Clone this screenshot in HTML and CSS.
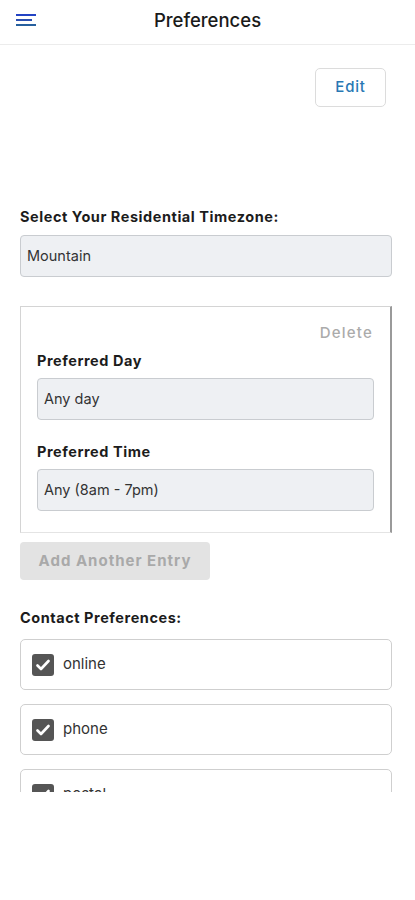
FILE: index.html
```html
<!DOCTYPE html>
<html lang="en-US">
    <head>
        <meta charset="UTF-8">
        <title>Preferences</title>
        <link rel="stylesheet" href="styles.css">
    </head>
    <body>

        <header class="topbar">
            <button class="menu-btn" aria-label="Menu">
                <svg width="22" height="14" viewBox="0 0 22 14">
                    <rect x="0" y="0" width="20" height="2" fill="#2343c4"/>
                    <rect x="0" y="5" width="16" height="2" fill="#2a4fb0"/>
                    <rect x="0" y="10" width="20" height="2" fill="#27609e"/>
                </svg>
            </button>
            <h1 class="title">Preferences</h1>
        </header>

        <main class="scroll">
            <div class="edit-row">
                <button class="edit-btn">Edit</button>
            </div>

            <label class="label">Select Your Residential Timezone:</label>
            <div class="field">Mountain</div>

            <div class="entry">
                <div class="delete">Delete</div>
                <label class="label label-sm">Preferred Day</label>
                <div class="field">Any day</div>
                <label class="label label-sm label-gap">Preferred Time</label>
                <div class="field">Any (8am - 7pm)</div>
            </div>

            <button class="add-btn">Add Another Entry</button>

            <label class="label label-contact">Contact Preferences:</label>
            <div class="check-row">
                <span class="check"><svg width="14" height="12" viewBox="0 0 14 12"><path d="M1.5 6.5 L5 10 L12.5 2" fill="none" stroke="#fff" stroke-width="2.6" stroke-linecap="round" stroke-linejoin="round"/></svg></span>
                <span>online</span>
            </div>
            <div class="check-row">
                <span class="check"><svg width="14" height="12" viewBox="0 0 14 12"><path d="M1.5 6.5 L5 10 L12.5 2" fill="none" stroke="#fff" stroke-width="2.6" stroke-linecap="round" stroke-linejoin="round"/></svg></span>
                <span>phone</span>
            </div>
            <div class="check-row">
                <span class="check"><svg width="14" height="12" viewBox="0 0 14 12"><path d="M1.5 6.5 L5 10 L12.5 2" fill="none" stroke="#fff" stroke-width="2.6" stroke-linecap="round" stroke-linejoin="round"/></svg></span>
                <span>postal</span>
            </div>
        </main>

    </body>
</html>
```

FILE: styles.css
```css
* {
    margin: 0;
    padding: 0;
    box-sizing: border-box;
}
body {
    background: #FFF;
    color: #222;
    font: 14px/1.25 Inter, "Liberation Sans", Arial, sans-serif;
    width: 415px;
}
button {
    font: inherit;
    background: none;
    border: 0;
}
.topbar {
    height: 45px;
    display: flex;
    align-items: center;
    justify-content: center;
    position: relative;
    border-bottom: 1px solid #ececec;
}
.menu-btn {
    position: absolute;
    left: 16px;
    top: 14px;
    line-height: 0;
}
.title {
    font-size: 18.5px;
    font-weight: 500;
    color: #1a1a1a;
    margin-top: -3px;
}
.scroll {
    height: 747px;
    overflow: hidden;
    padding: 0 23px 0 20px;
}
.edit-row {
    display: flex;
    justify-content: flex-end;
    padding: 23px 6px 0 0;
}
.edit-btn {
    width: 71px;
    height: 39px;
    border: 1px solid #dcdcdc;
    border-radius: 5px;
    color: #2878b4;
    font-size: 15px;
    font-weight: 500;
    letter-spacing: 0.8px;
}
.label {
    display: block;
    font-weight: 700;
    font-size: 14.5px;
    letter-spacing: 0.55px;
    color: #1c1c1c;
    margin: 101px 0 9px;
}
.field {
    height: 42px;
    display: flex;
    align-items: center;
    padding: 0 6px;
    background: #eef0f3;
    border: 1px solid #c9ccd0;
    border-radius: 4px;
    font-size: 14.5px;
    color: #333;
}
.entry {
    margin-top: 29px;
    border: 1px solid #d4d4d4;
    border-right: 2px solid #9a9a9a;
    border-bottom-color: #e4e4e4;
    padding: 17px 16px 21px 16px;
}
.delete {
    text-align: right;
    color: #ababab;
    font-size: 15px;
    font-weight: 500;
    letter-spacing: 1.2px;
    padding-right: 1px;
}
.label-sm {
    margin: 9px 0 8px;
}
.label-gap {
    margin-top: 23px;
}
.add-btn {
    display: block;
    margin-top: 9px;
    width: 190px;
    height: 38px;
    background: #e3e3e3;
    border-radius: 4px;
    color: #a9a9a9;
    font-weight: 700;
    font-size: 15px;
    letter-spacing: 1px;
}
.label-contact {
    margin: 29px 0 12px;
}
.check-row {
    height: 51px;
    display: flex;
    align-items: center;
    gap: 9px;
    padding: 0 11px;
    margin-bottom: 14px;
    border: 1px solid #cfcfcf;
    border-radius: 5px;
    font-size: 15px;
    color: #333;
}
.check {
    width: 22px;
    height: 22px;
    border-radius: 3px;
    background: #555;
    display: flex;
    align-items: center;
    justify-content: center;
}
```
